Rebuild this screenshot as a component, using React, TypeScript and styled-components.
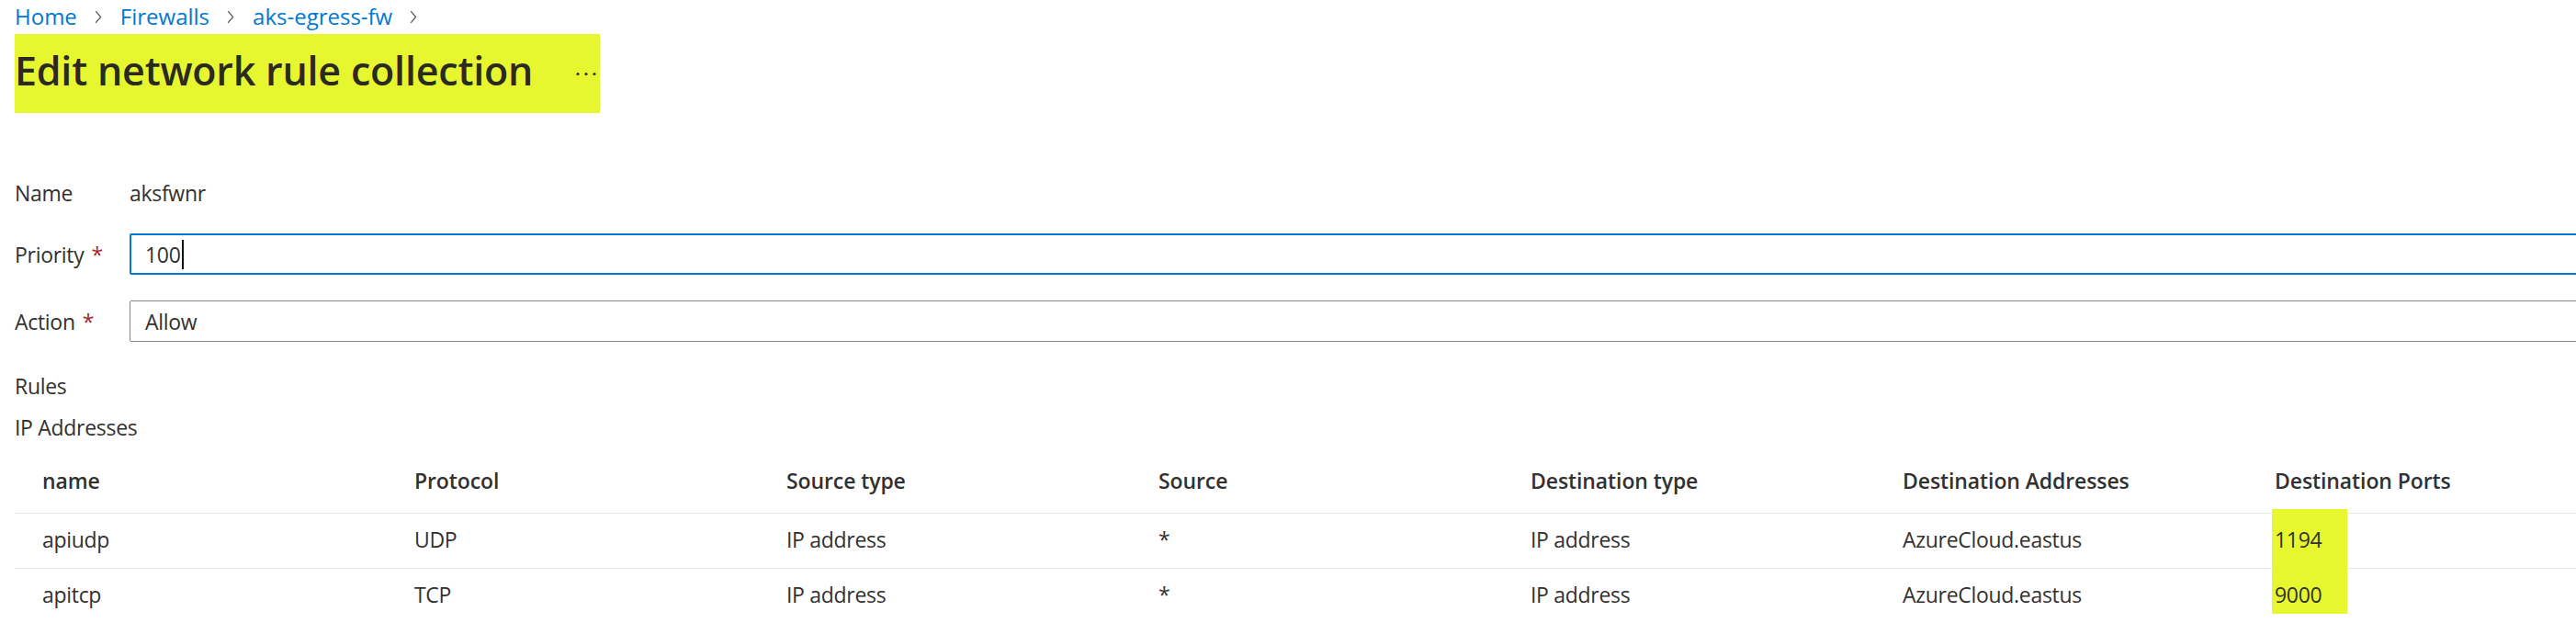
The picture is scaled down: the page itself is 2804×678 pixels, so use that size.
import React from "react";
import styled, { createGlobalStyle } from "styled-components";

const GlobalStyle = createGlobalStyle`
  * { box-sizing: border-box; }
  html, body { margin: 0; padding: 0; background: #ffffff; overflow: hidden; }
  body {
    font-family: "Open Sans", "Segoe UI", "Noto Sans", sans-serif;
    font-size: 23px;
    letter-spacing: -0.3px;
    color: #323130;
  }
`;

const HIGHLIGHT = "#e6f730";

const Page = styled.div`
  width: 2804px;
  height: 678px;
  overflow: hidden;
  padding: 2px 0 0 16px;
`;

const Breadcrumb = styled.nav`
  display: flex;
  align-items: center;
  height: 32px;
  line-height: 32px;
  font-size: 24px;
  letter-spacing: 0;
`;

const Crumb = styled.a`
  color: #0078d4;
  text-decoration: none;
`;

const ChevronWrap = styled.span`
  display: inline-flex;
  align-items: center;
  margin: 0 20px 0 19px;
`;

const Chevron = () => (
  <ChevronWrap>
    <svg width="8" height="15" viewBox="0 0 8 15">
      <polyline points="1.2,1.2 6.6,7.5 1.2,13.8" fill="none" stroke="#605e5c" strokeWidth="1.3" />
    </svg>
  </ChevronWrap>
);

const TitleBox = styled.div`
  display: flex;
  align-items: flex-start;
  justify-content: space-between;
  width: 637px;
  height: 86px;
  margin-top: 3px;
  padding: 10px 4px 16px 0;
  background: ${HIGHLIGHT};
`;

const Title = styled.h1`
  margin: 0;
  font-size: 43px;
  font-weight: 600;
  line-height: 60px;
  color: #2b2a1f;
  letter-spacing: -0.2px;
`;

const MoreIcon = () => (
  <svg width="22" height="60" viewBox="0 0 22 60">
    <circle cx="2" cy="33.5" r="1.6" fill="#323130" />
    <circle cx="11" cy="33.5" r="1.6" fill="#323130" />
    <circle cx="20" cy="33.5" r="1.6" fill="#323130" />
  </svg>
);

const FormRow = styled.div<{ $mt: number }>`
  display: grid;
  grid-template-columns: 125px 1fr;
  align-items: center;
  height: 45px;
  margin-top: ${(p) => p.$mt}px;
  margin-right: -30px;
  line-height: 32px;
`;

const Label = styled.label`
  color: #323130;
`;

const Required = styled.span`
  color: #a4262c;
  margin-left: 8px;
`;

const StaticValue = styled.div`
  color: #323130;
`;

const Field = styled.div<{ $focused?: boolean }>`
  display: flex;
  align-items: center;
  height: 45px;
  border: ${(p) => (p.$focused ? "2px solid #0078d4" : "1px solid #8a8886")};
  border-radius: 2px;
  padding-left: ${(p) => (p.$focused ? "15px" : "16px")};
  color: #323130;
  background: #fff;
`;

const Caret = styled.span`
  display: inline-block;
  width: 2px;
  height: 32px;
  background: #111;
  margin-left: 1px;
`;

const SectionLabel = styled.div<{ $mt: number }>`
  line-height: 32px;
  margin-top: ${(p) => p.$mt}px;
`;

const Table = styled.div`
  position: relative;
  width: 2835px;
`;

const GridRow = styled.div`
  display: grid;
  grid-template-columns: repeat(7, 405px);
  border-bottom: 1px solid #e9e7e5;
`;

const HeaderCell = styled.div`
  position: relative;
  z-index: 1;
  padding: 26px 0 19px 30px;
  line-height: 32px;
  font-weight: 600;
  letter-spacing: -0.1px;
  color: #323130;
  white-space: nowrap;
`;

const Cell = styled.div`
  position: relative;
  z-index: 1;
  padding: 12px 0 15px 30px;
  line-height: 32px;
  color: #323130;
  white-space: nowrap;
`;

const PortsHighlight = styled.div`
  position: absolute;
  z-index: 0;
  left: 2457px;
  top: 73px;
  width: 82px;
  height: 114px;
  background: ${HIGHLIGHT};
`;

const columns = [
  "name",
  "Protocol",
  "Source type",
  "Source",
  "Destination type",
  "Destination Addresses",
  "Destination Ports",
];

const rules = [
  ["apiudp", "UDP", "IP address", "*", "IP address", "AzureCloud.eastus", "1194"],
  ["apitcp", "TCP", "IP address", "*", "IP address", "AzureCloud.eastus", "9000"],
];

export default function App() {
  return (
    <>
      <GlobalStyle />
      <Page>
        <Breadcrumb>
          <Crumb>Home</Crumb>
          <Chevron />
          <Crumb>Firewalls</Crumb>
          <Chevron />
          <Crumb>aks-egress-fw</Crumb>
          <Chevron />
        </Breadcrumb>

        <TitleBox>
          <Title>Edit network rule collection</Title>
          <MoreIcon />
        </TitleBox>

        <FormRow $mt={64}>
          <Label>Name</Label>
          <StaticValue>aksfwnr</StaticValue>
        </FormRow>
        <FormRow $mt={22}>
          <Label>
            Priority<Required>*</Required>
          </Label>
          <Field $focused>
            100
            <Caret />
          </Field>
        </FormRow>
        <FormRow $mt={28}>
          <Label>
            Action<Required>*</Required>
          </Label>
          <Field>Allow</Field>
        </FormRow>

        <SectionLabel $mt={32}>Rules</SectionLabel>
        <SectionLabel $mt={13}>IP Addresses</SectionLabel>

        <Table>
          <PortsHighlight />
          <GridRow>
            {columns.map((c) => (
              <HeaderCell key={c}>{c}</HeaderCell>
            ))}
          </GridRow>
          {rules.map((r) => (
            <GridRow key={r[0]}>
              {r.map((v, i) => (
                <Cell key={i}>{v}</Cell>
              ))}
            </GridRow>
          ))}
        </Table>
      </Page>
    </>
  );
}
